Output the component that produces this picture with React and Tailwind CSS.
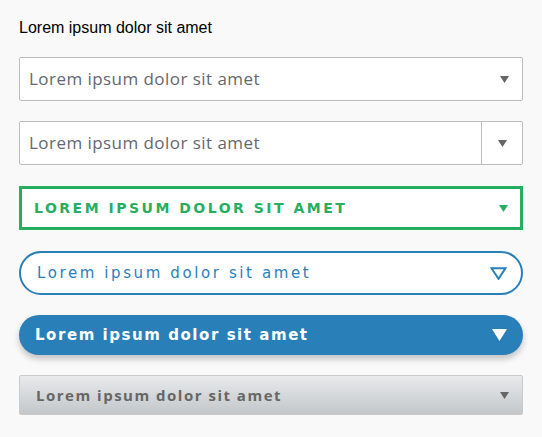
import React from "react";

const Tri = ({ className }) => (
  <svg width="9" height="7" viewBox="0 0 9 7" className={className}>
    <path d="M0 0 H9 L4.5 7 Z" fill="currentColor" />
  </svg>
);

export default function App() {
  return (
    <div className="min-h-[437px] bg-[#f9f9f9] px-[19px] pt-[19px] pb-[20px]">
      <div className="text-[16px] leading-[18px] text-black font-['Liberation_Sans',Arial,sans-serif]">
        Lorem ipsum dolor sit amet
      </div>

      {/* 1 */}
      <div className="mt-[20px] flex h-[44px] items-center justify-between rounded-[2px] border border-[#bdbdbd] bg-white pl-[9px] pr-[13px]">
        <span className="text-[17px] tracking-[0.45px] text-[#666670] font-['Open_Sans',sans-serif]">Lorem ipsum dolor sit amet</span>
        <Tri className="text-[#666]" />
      </div>

      {/* 2 */}
      <div className="mt-[20px] flex h-[44px] items-stretch rounded-[2px] border border-[#bdbdbd] bg-white">
        <div className="flex flex-1 items-center pl-[9px]">
          <span className="text-[17px] tracking-[0.45px] text-[#666670] font-['Open_Sans',sans-serif]">Lorem ipsum dolor sit amet</span>
        </div>
        <div className="flex w-[41px] items-center justify-center border-l border-[#bdbdbd]">
          <Tri className="text-[#666]" />
        </div>
      </div>

      {/* 3 */}
      <div className="mt-[21px] flex h-[44px] items-center justify-between border-[3px] border-[#27ae60] bg-white pl-[12px] pr-[12px]">
        <span className="text-[14px] font-bold uppercase tracking-[2.5px] text-[#27ae60] font-['DejaVu_Sans',sans-serif]">
          Lorem ipsum dolor sit amet
        </span>
        <Tri className="text-[#27ae60]" />
      </div>

      {/* 4 */}
      <div className="mt-[21px] flex h-[44px] items-center justify-between rounded-full border-2 border-[#2980b9] bg-white pl-[16px] pr-[14px]">
        <span className="text-[15px] tracking-[2.6px] text-[#2980b9] font-['DejaVu_Sans',sans-serif]">
          Lorem ipsum dolor sit amet
        </span>
        <svg width="17" height="13" viewBox="0 0 17 13" className="text-[#2980b9]">
          <path d="M1.5 1.2 H15.5 L8.5 11.8 Z" fill="none" stroke="currentColor" strokeWidth="2" strokeLinejoin="miter" />
        </svg>
      </div>

      {/* 5 */}
      <div className="mt-[20px] flex h-[40px] items-center justify-between rounded-full bg-[#2980b9] pl-[16px] pr-[16px] shadow-[0_4px_6px_rgba(0,0,0,0.22)]">
        <span className="text-[15px] font-bold tracking-[1.55px] text-white font-['DejaVu_Sans',sans-serif]">
          Lorem ipsum dolor sit amet
        </span>
        <svg width="15" height="12" viewBox="0 0 15 12" className="text-white">
          <path d="M0 0 H15 L7.5 12 Z" fill="currentColor" />
        </svg>
      </div>

      {/* 6 */}
      <div className="mt-[20px] flex h-[40px] items-center justify-between rounded-[2px] border border-[#c8cacc] bg-gradient-to-b from-[#e8eaeb] to-[#c3c7ca] pl-[16px] pr-[13px]">
        <span className="text-[15px] font-bold tracking-[1.5px] text-[#666] font-['Open_Sans',sans-serif]">
          Lorem ipsum dolor sit amet
        </span>
        <Tri className="text-[#666]" />
      </div>
    </div>
  );
}
